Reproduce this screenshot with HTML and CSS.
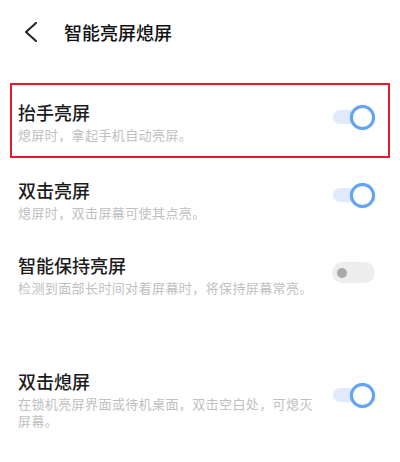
FILE: index.html
```html
<!DOCTYPE html>
<html lang="zh-CN">
<head>
<meta charset="utf-8">
<link rel="stylesheet" href="styles.css">
</head>
<body>
<div class="page">
  <header class="header">
    <svg class="back" width="14" height="20" viewBox="0 0 14 20"><polyline points="12,1 2,10 12,19" fill="none" stroke="#222" stroke-width="2" stroke-linecap="round" stroke-linejoin="round"/></svg>
    <h1 class="title">智能亮屏熄屏</h1>
  </header>
  <div class="list">
    <div class="row row-highlight">
      <div class="text">
        <div class="label">抬手亮屏</div>
        <div class="desc">熄屏时，拿起手机自动亮屏。</div>
      </div>
      <div class="toggle on"><span class="knob"></span></div>
    </div>
    <div class="row row-next">
      <div class="text">
        <div class="label">双击亮屏</div>
        <div class="desc">熄屏时，双击屏幕可使其点亮。</div>
      </div>
      <div class="toggle on"><span class="knob"></span></div>
    </div>
    <div class="row">
      <div class="text">
        <div class="label">智能保持亮屏</div>
        <div class="desc">检测到面部长时间对着屏幕时，将保持屏幕常亮。</div>
      </div>
      <div class="toggle off"><span class="knob"></span></div>
    </div>
    <div class="row row-section">
      <div class="text">
        <div class="label">双击熄屏</div>
        <div class="desc">在锁机亮屏界面或待机桌面，双击空白处，可熄灭屏幕。</div>
      </div>
      <div class="toggle on"><span class="knob"></span></div>
    </div>
  </div>
</div>
</body>
</html>
```
FILE: styles.css
```css
html, body {
  margin: 0;
  padding: 0;
  background: #ffffff;
}
body {
  font-family: "Noto Sans CJK SC", "Noto Sans", sans-serif;
  color: #1a1a1a;
  width: 400px;
  height: 462px;
  overflow: hidden;
}
.header {
  height: 64px;
  display: flex;
  align-items: center;
  padding-left: 24px;
}
.back {
  display: block;
}
.title {
  margin: 0 0 0 26px;
  font-size: 18px;
  font-weight: 500;
  line-height: 26px;
  color: #111;
}
.list {
  margin-top: 19px;
  display: flex;
  flex-direction: column;
}
.row {
  margin: 0 10px;
  border: 2px solid transparent;
  padding: 0 13px 0 6px;
  min-height: 71px;
  display: flex;
  align-items: center;
  gap: 15px;
}
.row-highlight {
  border-color: #e8192c;
}
.row-next {
  margin-top: 3px;
}
.row-section {
  margin-top: 50px;
}
.text {
  flex: 1;
  min-width: 0;
}
.label {
  font-size: 18px;
  font-weight: 500;
  line-height: 26px;
  color: #1c1c1c;
}
.desc {
  margin-top: 1px;
  font-size: 13px;
  letter-spacing: 0.4px;
  line-height: 17px;
  color: #c0c0c0;
}
.toggle {
  position: relative;
  width: 42px;
  height: 25px;
  flex: none;
  display: flex;
  align-items: center;
  margin-top: -6px;
}
.toggle.on::before {
  content: "";
  position: absolute;
  left: 0;
  top: 5px;
  width: 32px;
  height: 14px;
  border-radius: 7px;
  background: #dfeafc;
}
.toggle.on .knob {
  position: relative;
  margin-left: auto;
  width: 19px;
  height: 19px;
  border-radius: 50%;
  background: #fff;
  border: 3px solid #63a3f2;
  box-shadow: 0 0 1px rgba(80, 150, 240, 0.6);
}
.toggle.off {
  width: 43px;
  height: 21px;
  border-radius: 11px;
  background: #ededed;
  margin-top: -2px;
}
.toggle.off .knob {
  margin-left: 5px;
  width: 10px;
  height: 10px;
  border-radius: 50%;
  background: #a9a9a9;
}
```
